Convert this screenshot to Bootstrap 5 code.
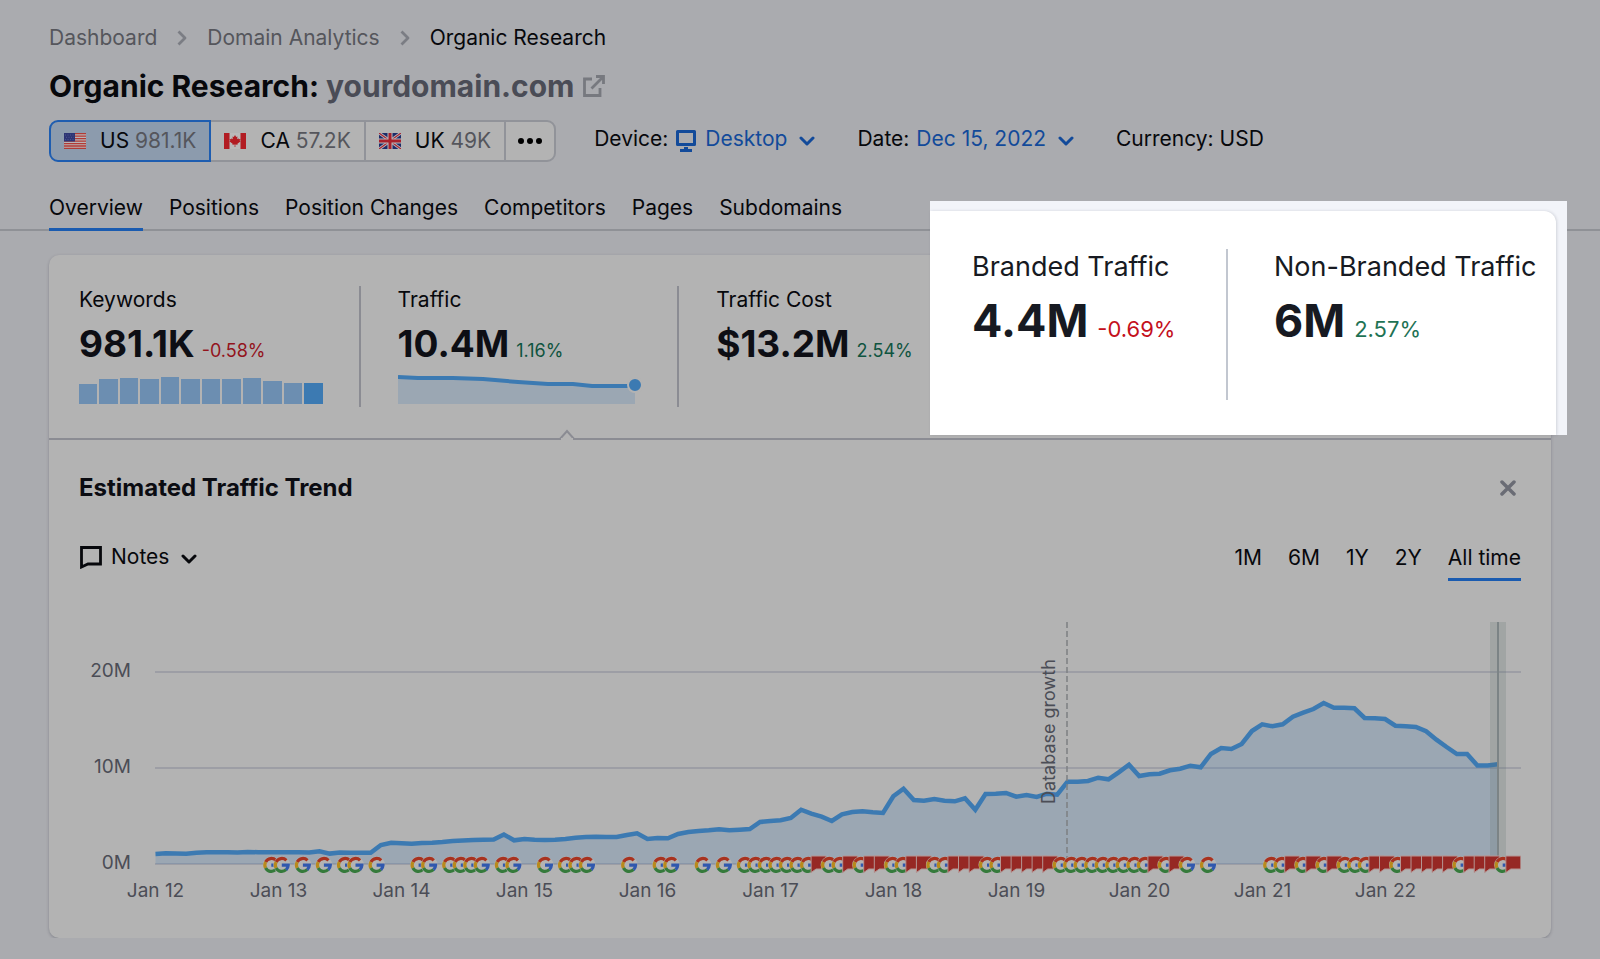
<!DOCTYPE html>
<html lang="en">
<head>
<meta charset="utf-8">
<meta name="viewport" content="width=device-width, initial-scale=1">
<title>Organic Research: yourdomain.com</title>
<link href="https://cdn.jsdelivr.net/npm/bootstrap@5.3.0/dist/css/bootstrap.min.css" rel="stylesheet">
<style>
  body { background: #aaabaf; color: #07080c; font-family: Inter, "Liberation Sans", sans-serif; font-size: 21px; line-height: 30px; overflow-x: hidden; }
  a { color: inherit; text-decoration: none; }
  .page-x { padding-left: 49px; padding-right: 49px; }
  .crumbs { gap: 20px; padding-top: 23px; color: #55565c; }
  .crumbs li[aria-current] { color: #07080c; }
  .title { font-size: 30px; line-height: 40px; font-weight: 700; margin: 13px 0 0; gap: 8px; }
  .title span { color: #4a4c56; }
  .filters { margin-top: 14px; gap: 38px; }
  .db-btn { display: flex; align-items: center; gap: 14px; height: 42px; padding: 0 13px; background: #b3b3b3; border: 2px solid #919399; color: #07080c; line-height: 30px; }
  .db-btn + .db-btn { margin-left: -2px; }
  .db-btn small { font-size: 21px; color: #55565c; }
  .db-btn.first { border-radius: 9px 0 0 9px; }
  .db-btn.last { border-radius: 0 9px 9px 0; padding: 0 11px; }
  .db-btn.on { background: #8c9bad; border-color: #1e5db0; z-index: 1; }
  .filter-text { gap: 42px; padding-bottom: 4px; }
  .pair { gap: 7px; }
  .drop { border: 0; background: none; padding: 0; color: #124a9a; display: inline-flex; align-items: center; gap: 8px; }
  .tabs { margin-top: 31px; gap: 26px; border-bottom: 2px solid #8f9196; }
  .tabs a, .ranges button { display: block; padding: 0 0 5px; border: 0; border-bottom: 3px solid transparent; background: none; color: #07080c; }
  .tabs a { margin-bottom: -2px; }
  .tabs a.on, .ranges button.on { border-color: #1a5bb0; }
  .panel { position: relative; margin-top: 24px; background: #b3b3b3; border-radius: 10px; box-shadow: 0 1px 3px rgba(40,44,60,.3); }
  .metrics { display: grid; grid-template-columns: repeat(4, 19fr) 10fr; padding: 31px 30px; position: relative; border-bottom: 2px solid #8b8c93; }
  .metric { height: 121px; border-right: 2px solid #8b8c93; margin-right: 37px; line-height: 28px; }
  .metric.plain { border: 0; }
  .metric .val { margin-top: 7px; gap: 7px; line-height: 46px; }
  .metric b { font-size: 37px; font-weight: 700; color: #0d0e14; }
  .metric i { font-size: 18px; font-style: normal; }
  .down { color: #93131c; } .up { color: #0f5440; }
  .bars { display: flex; align-items: flex-end; gap: 2px; height: 28px; margin: 2px 36px 0 0; }
  .bars div { flex: 1; background: #6c8eb1; }
  .bars div:last-child { background: #3c7ab2; }
  .spark { display: block; }
  .caret-up { position: absolute; left: 509px; bottom: -2px; }
  .spotlight { position: absolute; top: -54px; right: -16px; width: 637px; height: 234px; background: #f2f4f9; padding: 10px 11px 0 0; z-index: 2; }
  .spot-card { background: #fff; height: 100%; border-radius: 0 12px 0 0; box-shadow: 1px 0 3px rgba(40,44,60,.16); padding: 38px 0 0 42px; color: #171a22; }
  .spot-item { width: 256px; height: 151px; border-right: 2px solid #c2c7d0; font-size: 27px; line-height: 36px; white-space: nowrap; }
  .spot-item.plain { border: 0; margin-left: 46px; }
  .spot-item .val { margin-top: 11px; gap: 9px; line-height: 50px; }
  .spot-item b { font-size: 45px; font-weight: 700; }
  .spot-item i { font-size: 22px; font-style: normal; }
  .spot-item .down { color: #c4101c; } .spot-item .up { color: #1f7355; }
  .trend { padding: 33px 30px 28px; }
  .trend h2 { font-size: 24px; line-height: 30px; font-weight: 700; margin: 0; color: #0b0c12; }
  .x-btn { border: 0; background: none; padding: 0; margin-right: 5px; display: flex; }
  .tools { margin-top: 40px; }
  .notes { color: #07080c; line-height: 28px; }
  .ranges { gap: 26px; }
  .chart { display: block; width: 100%; margin-top: 39px; }
  .chart text { font-size: 19px; fill: #4b4d56; }
  .chart .event-label { font-size: 18px; }
</style>
</head>
<body>
<svg width="0" height="0" class="position-absolute" aria-hidden="true">
  <symbol id="chev" viewBox="0 0 16 10"><path d="M2 2l6 6 6-6" fill="none" stroke="currentColor" stroke-width="3" stroke-linecap="round" stroke-linejoin="round"/></symbol>
  <symbol id="crumb" viewBox="0 0 10 16"><path d="M1.500 1.500l6.500 6.500-6.500 6.500" fill="none" stroke="#7b7d84" stroke-width="2.800" stroke-linejoin="round"/></symbol>
</svg>
<header>
  <div class="page-x">
    <nav aria-label="breadcrumb">
      <ol class="crumbs list-unstyled d-flex align-items-center mb-0">
        <li><a href="#">Dashboard</a></li>
        <li class="d-flex" aria-hidden="true"><svg width="10" height="16"><use href="#crumb"/></svg></li>
        <li><a href="#">Domain Analytics</a></li>
        <li class="d-flex" aria-hidden="true"><svg width="10" height="16"><use href="#crumb"/></svg></li>
        <li aria-current="page">Organic Research</li>
      </ol>
    </nav>
    <h1 class="title d-flex align-items-center">
      <div>Organic Research: <span>yourdomain.com</span></div>
      <a href="#" class="d-flex" aria-label="Open domain"><svg width="22" height="22" viewBox="0 0 22 22" fill="none" stroke="#77797f" stroke-width="2.800"><path d="M9 4H1.500v16.500H17V13M13 1.500h7.500V9M20 2L8.500 13.500"/></svg></a>
    </h1>
    <div class="filters d-flex align-items-center">
      <div class="d-flex" role="group" aria-label="Database">
        <button class="db-btn first on position-relative" type="button">
          <svg width="22" height="16" viewBox="0 0 22 16"><path fill="#b9b3b5" d="M0 0h22v16H0z"/><path stroke="#b23a35" stroke-width="1.300" d="M0 .6h22M0 3.100h22M0 5.600h22M0 8.100h22M0 10.600h22M0 13h22M0 15.400h22"/><path fill="#2d3575" d="M0 0h11v8.500H0z"/><path stroke="#4f5890" stroke-dasharray="1 1.500" d="M1 2h9M2 4.300h8M1 6.600h9"/></svg>
          <span>US <small>981.1K</small></span>
        </button>
        <button class="db-btn" type="button">
          <svg width="22" height="16" viewBox="0 0 22 16"><path fill="#b9b9b9" d="M0 0h22v16H0z"/><path fill="#b21c22" d="M0 0h5.500v16H0zM16.500 0H22v16h-5.500zM11 2l1.200 2 1.300-.5-.4 2.800 1.300-1 .4 1 1.600-.2-.7 1.700.7.600-3 2.400.2 1-2.300-.3.100 2.500h-.8l.1-2.500-2.300.3.200-1-3-2.400.7-.6-.7-1.700 1.600.2.400-1 1.300 1-.4-2.800 1.300.5z"/></svg>
          <span>CA <small>57.2K</small></span>
        </button>
        <button class="db-btn" type="button">
          <svg width="22" height="16" viewBox="0 0 22 16"><path fill="#1d2b68" d="M0 0h22v16H0z"/><path stroke="#b9b9bd" stroke-width="3" d="M0 0l22 16M22 0L0 16"/><path stroke="#a82530" stroke-width="1.200" d="M0 0l22 16M22 0L0 16"/><path stroke="#b9b9bd" stroke-width="5" d="M11 0v16M0 8h22"/><path stroke="#a8202b" stroke-width="3" d="M11 0v16M0 8h22"/></svg>
          <span>UK <small>49K</small></span>
        </button>
        <button class="db-btn last" type="button" aria-label="More databases">
          <svg width="26" height="8" viewBox="0 0 26 8"><circle cx="4" cy="4" r="3"/><circle cx="13" cy="4" r="3"/><circle cx="22" cy="4" r="3"/></svg>
        </button>
      </div>
      <div class="filter-text d-flex align-items-center">
        <div class="pair d-flex align-items-center"><span>Device:</span>
          <button class="drop" type="button"><svg class="mt-1" width="22" height="22" viewBox="0 0 22 22"><path d="M2.500 1.500h17v13h-17z" fill="none" stroke="#124a9a" stroke-width="3" stroke-linejoin="round"/><path fill="#124a9a" d="M9 17h4v2h4v3H5v-3h4z"/></svg>Desktop <svg class="ms-1 mt-1" width="16" height="10"><use href="#chev"/></svg></button></div>
        <div class="pair d-flex align-items-center"><span>Date:</span>
          <button class="drop" type="button">Dec 15, 2022 <svg class="ms-1 mt-1" width="16" height="10"><use href="#chev"/></svg></button></div>
        <div>Currency: USD</div>
      </div>
    </div>
  </div>
  <nav class="tabs page-x d-flex" aria-label="Report sections">
    <a href="#" class="on" aria-current="page">Overview</a><a href="#">Positions</a><a href="#">Position Changes</a><a href="#">Competitors</a><a href="#">Pages</a><a href="#">Subdomains</a>
  </nav>
</header>
<main class="page-x">
  <div class="panel">
    <section class="metrics">
      <div class="metric"><div>Keywords</div>
        <div class="val d-flex align-items-baseline"><b>981.1K</b><i class="down">-0.58%</i></div>
        <div class="bars" id="bars"></div></div>
      <div class="metric"><div>Traffic</div>
        <div class="val d-flex align-items-baseline"><b>10.4M</b><i class="up">1.16%</i></div>
        <svg class="spark" width="246" height="31" viewBox="0 1 246 31"><path fill="#9ba7b3" d="M0 4l20 1 55 1 40 3 35 2h25l20 3h42v17H0z"/><path fill="none" stroke="#3c7ab2" stroke-width="4" d="M0 4l20 1 35 0 30 1 35 3 30 2h25l19 2h44"/><circle cx="237" cy="12" r="7" fill="#3c7ab2" stroke="#b3b3b3" stroke-width="2"/></svg></div>
      <div class="metric plain"><div>Traffic Cost</div>
        <div class="val d-flex align-items-baseline"><b>$13.2M</b><i class="up">2.54%</i></div></div>
      <svg class="caret-up" width="18" height="11" viewBox="0 0 18 11"><path fill="#b3b3b3" stroke="#8b8c93" stroke-width="2" d="M0 10h2l7-8 7 8h2"/><path fill="#b3b3b3" d="M3 9h12v2H3z"/></svg>
    </section>
    <section class="spotlight">
      <div class="spot-card d-flex">
        <div class="spot-item"><div>Branded Traffic</div>
          <div class="val d-flex align-items-baseline"><b>4.4M</b><i class="down">-0.69%</i></div></div>
        <div class="spot-item plain"><div>Non-Branded Traffic</div>
          <div class="val d-flex align-items-baseline"><b>6M</b><i class="up">2.57%</i></div></div>
      </div>
    </section>
    <section class="trend">
      <div class="d-flex justify-content-between align-items-center">
        <h2>Estimated Traffic Trend</h2>
        <button class="x-btn" type="button" aria-label="Close"><svg width="16" height="16" viewBox="0 0 16 16"><path d="M2 2l12 12M14 2L2 14" stroke="#6a6c75" stroke-width="3.500" stroke-linecap="round"/></svg></button>
      </div>
      <div class="tools d-flex justify-content-between align-items-start">
        <button class="drop notes" type="button"><svg width="24" height="24" viewBox="0 0 24 24"><path d="M2.500 2.500h19v16.500H9L2.500 22z" fill="none" stroke="currentColor" stroke-width="2.800"/></svg>Notes <svg class="ms-1 mt-1" width="16" height="10"><use href="#chev"/></svg></button>
        <div class="ranges d-flex" role="group" aria-label="Period">
          <button type="button">1M</button><button type="button">6M</button><button type="button">1Y</button><button type="button">2Y</button><button type="button" class="on">All time</button>
        </div>
      </div>
      <svg class="chart" id="chart" viewBox="79 620 1442 290" role="img" aria-label="Estimated traffic by month">
        <defs>
          <g id="gmark"><circle r="8.500" fill="#b3b3b3"/>
            <g fill="none" stroke-width="3.200">
              <path stroke="#a8321f" d="M4.600 -4.600A6.400 6.400 0 0 0 -5.700 -3"/>
              <path stroke="#b88a1c" d="M-5.700 -3A6.400 6.400 0 0 0 -5.700 3"/>
              <path stroke="#357a3b" d="M-5.700 3A6.400 6.400 0 0 0 4.300 4.700"/>
              <path stroke="#3058ae" d="M4.300 4.700A6.400 6.400 0 0 0 6.400 .2H0"/>
            </g></g>
          <path id="fmark" fill="#962824" stroke="#b59593" stroke-width="1" d="M-7.500 -9H7.500V4H-2.500L-7.500 7.500z"/>
        </defs>
        <g stroke="#9d9ea5" stroke-width="2"><path d="M155 672h1366M155 768h1366M155 864h1366"/></g>
        <path id="area" fill="#3c7ab2" fill-opacity=".2"/>
        <path id="line" fill="none" stroke="#3c7ab2" stroke-width="4.500" stroke-linejoin="miter"/>
        <path fill="#5a6f6a" fill-opacity=".2" d="M1490 622h16v242h-16z"/>
        <path stroke="#7c8486" stroke-width="2" d="M1498 622v242"/>
        <path stroke="#7d8082" stroke-width="1.500" stroke-dasharray="6 3" d="M1067 622v242"/>
        <text class="event-label" transform="translate(1055 804) rotate(-90)">Database growth</text>
        <g text-anchor="end"><text x="131" y="677">20M</text><text x="131" y="773">10M</text><text x="131" y="869">0M</text></g>
        <g id="years" text-anchor="middle"></g>
        <g id="marks"></g>
      </svg>
    </section>
  </div>
</main>
<script src="https://cdn.jsdelivr.net/npm/bootstrap@5.3.0/dist/js/bootstrap.bundle.min.js"></script>
<script>
  const byId = id => document.getElementById(id);
  byId('bars').innerHTML = [20,25,26,25,27,25,25,25,26,23,21,21].map(h => `<div style="height:${h}px"></div>`).join('');
  // One level per month, January 2012 to December 2022.
  const levels = [854,853.3,853.5,853.7,852.7,852.3,852.3,852.3,852.5,852,852.2,852.3,852.3,852.3,852.3,852.6,851.3,853.6,852.5,852.7,852.8,852.8,
    845,842.7,843.2,843.7,843,842.7,842,841,840.6,840,839.7,839.5,834.5,840.3,839,839.7,840,839.8,839,837.7,837,836.8,
    837,837,835,833.3,839,838,838.3,834,832,831,830.3,829.3,830.3,829.7,829,822,821,820.3,818,809.7,813.7,816.7,821,814.3,812,811.3,812.3,813,
    796.3,788.7,800,800.7,799,800.7,801.3,798.3,809.7,794,793.7,793,796.7,795,797,793.7,794.7,781.7,781.7,781,777.7,779.3,772.3,764.7,
    776,774.3,773.7,770.3,768.7,765.7,767.3,754,748,749,744,731,724.3,726.3,724.3,716.7,712.7,709,703,707.7,707.7,708.3,718,718.3,
    719,725.7,726.3,727,731.3,739.7,747,754,754,765.5,765.5,764.3];
  const d = 'M' + levels.map((y, i) => (155.5 + 10.247 * i).toFixed(1) + ' ' + y).join('L');
  byId('line').setAttribute('d', d);
  byId('area').setAttribute('d', d + 'V864H155.5z');
  byId('years').innerHTML = [...Array(11)].map((_, i) => `<text x="${155.5 + 123 * i}" y="897">Jan ${12 + i}</text>`).join('');
  const updates = [0,1,3,5,7,8,10,14,15,17,18,19,20,22,23,26,28,29,30,34,37,38,41,43,45,46,47,48,49,50,51,53,54,56,59,60,63,64,68,69,75,76,77,78,79,80,81,82,83,85,87,89,95,96,98,100,102,103,104,107,113,117];
  const flags = [52,55,57,58,61,62,65,66,67,70,71,72,73,74,84,86,97,99,101,105,106,108,109,110,111,112,114,115,116,118];
  byId('marks').innerHTML = [...updates.map(k => [k, 'gmark']), ...flags.map(k => [k, 'fmark'])].sort((a, b) => a[0] - b[0])
    .map(([k, id]) => `<use href="#${id}" x="${(271.3 + 10.525 * k).toFixed(1)}" y="865"/>`).join('');
</script>
</body>
</html>
